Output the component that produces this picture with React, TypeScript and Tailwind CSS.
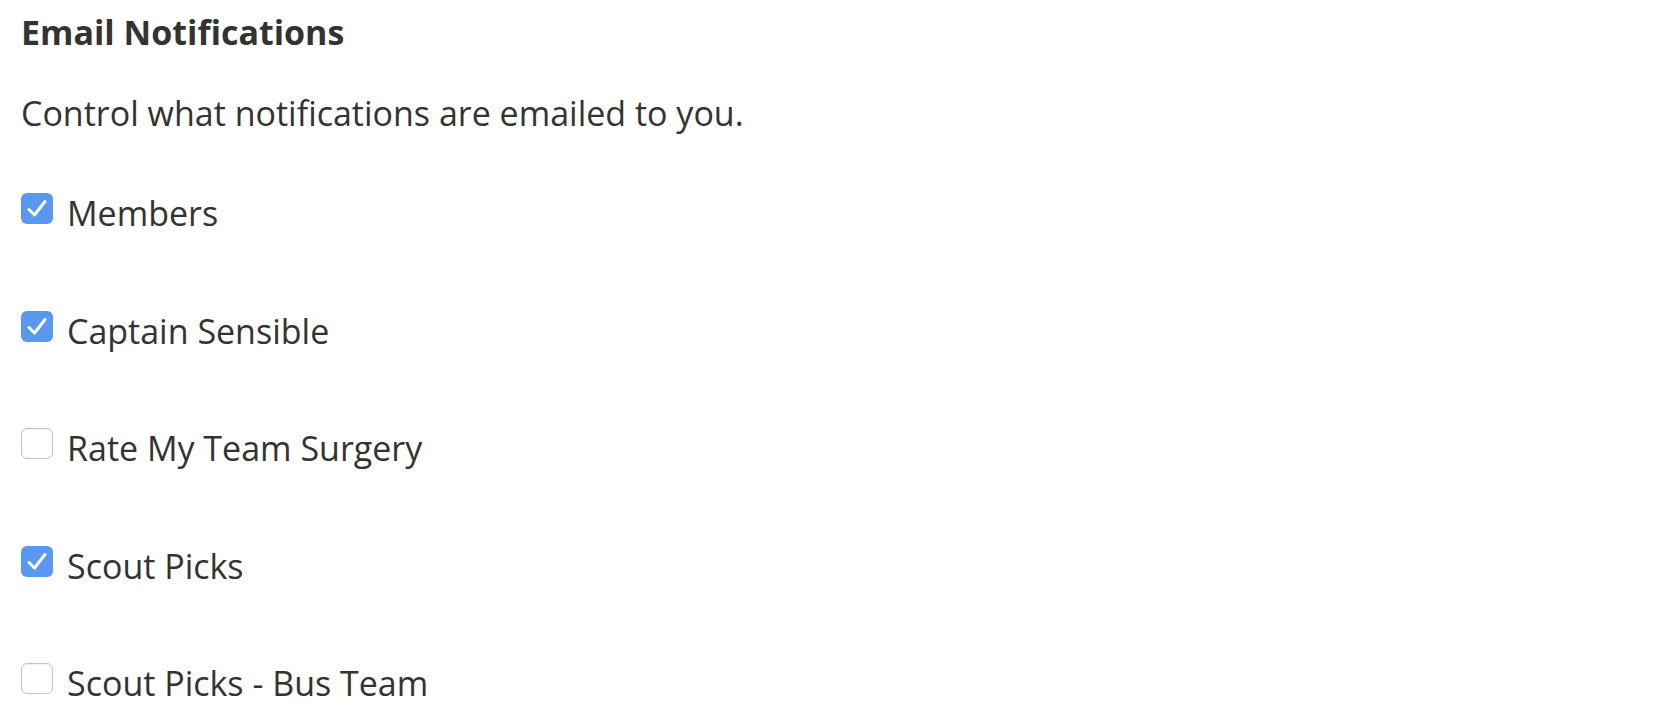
import { useState } from "react"

const initial = [
  { id: "members", label: "Members", checked: true },
  { id: "captain", label: "Captain Sensible", checked: true },
  { id: "rmt", label: "Rate My Team Surgery", checked: false },
  { id: "scout", label: "Scout Picks", checked: true },
  { id: "bus", label: "Scout Picks - Bus Team", checked: false },
]

function Checkbox({ checked, onChange }: { checked: boolean; onChange: () => void }) {
  return (
    <button
      type="button"
      role="checkbox"
      aria-checked={checked}
      onClick={onChange}
      className={
        checked
          ? "w-[32px] h-[31px] -mt-[6px] rounded-[6px] bg-[#5898f3] flex items-center justify-center shrink-0"
          : "w-[32px] h-[31px] -mt-[6px] rounded-[6px] bg-white border-[1.5px] border-[#c4c4c4] shadow-[inset_0_1px_1px_rgba(0,0,0,0.06)] shrink-0"
      }
    >
      {checked && (
        <svg width="32" height="31" viewBox="0 0 32 31" fill="none">
          <path d="M8 16.5L13.5 22L24 8.5" stroke="white" strokeWidth="3" strokeLinecap="round" strokeLinejoin="round" />
        </svg>
      )}
    </button>
  )
}

export default function App() {
  const [items, setItems] = useState(initial)

  const toggle = (id: string) =>
    setItems((prev) => prev.map((i) => (i.id === id ? { ...i, checked: !i.checked } : i)))

  return (
    <div className="min-h-[717px] bg-white pl-[21px] text-[#333333] font-['Open_Sans',sans-serif]">
      <h2 className="h-[64px] flex items-center text-[34px] font-bold">Email Notifications</h2>
      <p className="mt-[17px] h-[64px] flex items-center text-[34px]">Control what notifications are emailed to you.</p>
      <div className="mt-[8px]">
        {items.map((item) => (
          <label key={item.id} className="h-[117.5px] flex items-center gap-[14px] cursor-pointer">
            <Checkbox checked={item.checked} onChange={() => toggle(item.id)} />
            <span className="mt-[4px] text-[34px]">{item.label}</span>
          </label>
        ))}
      </div>
    </div>
  )
}
